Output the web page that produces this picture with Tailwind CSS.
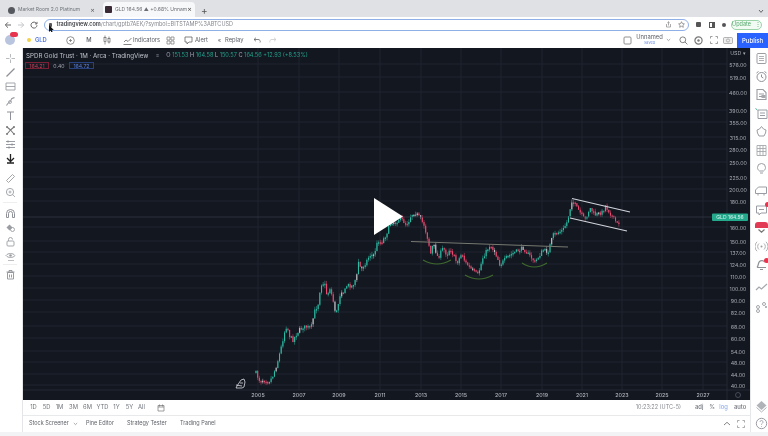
<!doctype html>
<html>
<head>
<meta charset="utf-8">
<script src="https://cdn.jsdelivr.net/npm/@tailwindcss/browser@4"></script>
<title>GLD chart</title>
</head>
<body class="m-0 overflow-hidden bg-white">
<div class="w-[768px] h-[436px] flex flex-col overflow-hidden bg-white font-['Inter','Liberation_Sans',sans-serif] text-[#4a4e57] blur-[0.6px] relative">

  <!-- tab strip -->
  <div class="h-[17px] shrink-0 bg-[#dfe1e5] flex items-end pl-[8px] relative">
    <div class="w-[87px] h-[14px] flex items-center text-[5px] text-[#70747a]">
      <span class="w-[7px] h-[7px] rounded-full bg-[#55585e] shrink-0"></span>
      <span class="ml-[3px] whitespace-nowrap">Market Room 2.0 Platinum</span>
      <span class="ml-auto text-[7px] text-[#666]">×</span>
    </div>
    <div class="ml-[8px] w-[92px] h-[15px] bg-[#f7f8f9] rounded-t-[4px] flex items-center pl-[2px] text-[5px] text-[#6b6f75]">
      <span class="w-[7px] h-[7px] rounded-[1px] bg-[#3a2a35] shrink-0"></span>
      <span class="ml-[3px] whitespace-nowrap">GLD 164.56 ▲ +0.68% Unnam</span>
      <span class="ml-auto mr-[4px] text-[7px] text-[#555]">×</span>
    </div>
    <span class="ml-[6px] mb-[1px] text-[10px] leading-[12px] text-[#555]">+</span>
    <svg class="ml-auto mr-[4px] mb-[3px]" width="6" height="5" viewBox="0 0 6 5"><path d="M1 1l2 2.400L5 1" fill="none" stroke="#666" stroke-width="1"/></svg>
  </div>

  <!-- url row -->
  <div class="h-[15px] shrink-0 bg-white flex items-center relative">
    <svg class="ml-[4px]" width="8" height="8" viewBox="0 0 8 8"><path d="M7 4H1.500M4 1.300L1.300 4 4 6.700" fill="none" stroke="#666" stroke-width="1"/></svg>
    <svg class="ml-[5px]" width="8" height="8" viewBox="0 0 8 8"><path d="M1 4h5.500M4 1.300L6.700 4 4 6.700" fill="none" stroke="#c4c6ca" stroke-width="1"/></svg>
    <svg class="ml-[5px]" width="8" height="8" viewBox="0 0 8 8"><path d="M6.600 2.600A3 3 0 1 0 7 4.300M7 .9v2H5" fill="none" stroke="#666" stroke-width="1"/></svg>
    <div class="ml-[6px] w-[645px] h-[12px] rounded-full border-[1.5px] border-[#8fb0e6] flex items-center pl-[4px] text-[5.500px]">
      <span class="w-[3px] h-[4px] bg-[#555] rounded-[1px] shrink-0"></span>
      <span class="ml-[4.500px] whitespace-nowrap"><span class="text-[#3f4247] font-semibold">tradingview.com</span><span class="text-[#85888e]">/chart/gptb7AEK/?symbol=BITSTAMP%3ABTCUSD</span></span>
      <svg class="ml-auto" width="7" height="7" viewBox="0 0 7 7"><path d="M1.500 3v3h4V3M3.500 4.500V.8M2.300 1.900L3.500.8l1.200 1.100" fill="none" stroke="#888" stroke-width=".7"/></svg>
      <svg class="ml-[6px] mr-[3px]" width="7" height="7" viewBox="0 0 7 7"><path d="M3.500.7l.9 1.900 2 .3-1.500 1.400.4 2-1.800-1-1.800 1 .4-2L.6 2.900l2-.3z" fill="none" stroke="#777" stroke-width=".7"/></svg>
    </div>
    <span class="ml-[7px] w-[5px] h-[5px] bg-[#555] rounded-[1px]"></span>
    <span class="ml-[8px] w-[6px] h-[6px] border border-[#555] border-r-[3px]"></span>
    <span class="ml-[7px] w-[4px] h-[4px] rounded-full bg-[#555]"></span>
    <div class="ml-[5px] w-[31px] h-[10px] rounded-full border border-[#9ad3a8] bg-[#f1faf3] flex items-center justify-center text-[5.500px] text-[#54a96c]">Update <span class="ml-[4px]">⋮</span></div>
    <!-- mouse cursor -->
    <svg class="absolute left-[48px] top-[8px]" width="6" height="9" viewBox="0 0 6 9"><path d="M1 0v7l1.600-1.500L3.800 8.500 5 8 3.800 5H5.800z" fill="#111"/></svg>
  </div>

  <!-- tradingview toolbar -->
  <div class="h-[16px] shrink-0 bg-white flex items-center text-[5.800px] text-[#5a5e66] relative whitespace-nowrap">
    <div class="ml-[5px] w-[10px] h-[10px] rounded-full bg-[#b9c4de] relative">
      <span class="absolute left-[5px] top-[-3px] w-[8px] h-[5px] rounded-full bg-[#e8344e]"></span>
    </div>
    <span class="ml-[12px] w-[4px] h-[4px] rounded-full bg-[#f3d34a]"></span>
    <span class="ml-[4px] w-[13px] text-[#4a72d8] font-semibold">GLD</span>
    <svg class="ml-[17.500px]" width="9" height="9" viewBox="0 0 9 9"><circle cx="4.500" cy="4.500" r="3.800" fill="none" stroke="#777" stroke-width=".8"/><path d="M4.500 3v3M3 4.500h3" stroke="#777" stroke-width=".8"/></svg>
    <span class="ml-[10.500px] w-[8px] text-center font-medium">M</span>
    <svg class="ml-[10px]" width="8" height="10" viewBox="0 0 8 10"><path d="M2 .5v9M6 1.500v7" stroke="#666" stroke-width=".7"/><rect x="1" y="2.500" width="2" height="4" fill="#fff" stroke="#666" stroke-width=".7"/><rect x="5" y="3.500" width="2" height="3.500" fill="#fff" stroke="#666" stroke-width=".7"/></svg>
    <svg class="ml-[11.500px]" width="9" height="9" viewBox="0 0 9 9"><path d="M.5 8.500h8M1 6l2-2 2 1.500L8.500 2" fill="none" stroke="#666" stroke-width=".8"/></svg>
    <span class="ml-[1.500px] w-[25px]">Indicators</span>
    <svg class="ml-[7.500px]" width="9" height="9" viewBox="0 0 9 9"><path d="M1 1h3v3H1zM5 1h3v3H5zM1 5h3v3H1zM5 5h3v3H5z" fill="none" stroke="#777" stroke-width=".7"/></svg>
    <svg class="ml-[9px]" width="9" height="9" viewBox="0 0 9 9"><path d="M1 1h7v5H5L3 8V6H1z" fill="none" stroke="#666" stroke-width=".8"/></svg>
    <span class="ml-[2.500px] w-[12px]">Alert</span>
    <span class="ml-[10px] w-[5px] text-center">«</span>
    <span class="ml-[3px] w-[18px]">Replay</span>
    <svg class="ml-[10px]" width="8" height="7" viewBox="0 0 8 7"><path d="M1 2.500h4a2 2 0 0 1 2 3M3 .7L1 2.500l2 1.800" fill="none" stroke="#666" stroke-width=".8"/></svg>
    <svg class="ml-[8px]" width="8" height="7" viewBox="0 0 8 7"><path d="M7 2.500H3a2 2 0 0 0-2 3M5 .7l2 1.800-2 1.800" fill="none" stroke="#ccc" stroke-width=".8"/></svg>

    <svg class="ml-[345.500px]" width="9" height="9" viewBox="0 0 9 9"><rect x="1" y="1" width="7" height="7" rx="1" fill="none" stroke="#777" stroke-width=".8"/></svg>
    <div class="ml-[5.500px] w-[25px] flex flex-col items-center leading-[6px]"><span class="text-[5.800px]">Unnamed</span><span class="text-[3.800px] text-[#6d8fe0]">Saved</span></div>
    <svg class="ml-[3.500px]" width="5" height="4" viewBox="0 0 5 4"><path d="M.8 1l1.700 1.600L4.200 1" fill="none" stroke="#888" stroke-width=".7"/></svg>
    <svg class="ml-[8px]" width="9" height="9" viewBox="0 0 9 9"><circle cx="3.800" cy="3.800" r="2.900" fill="none" stroke="#666" stroke-width=".8"/><path d="M6 6l2.400 2.400" stroke="#666" stroke-width=".8"/></svg>
    <svg class="ml-[6px]" width="9" height="9" viewBox="0 0 9 9"><circle cx="4.500" cy="4.500" r="3.600" fill="none" stroke="#777" stroke-width="1.200"/><circle cx="4.500" cy="4.500" r="1.200" fill="#777"/></svg>
    <svg class="ml-[7.500px]" width="8" height="8" viewBox="0 0 8 8"><path d="M.5 2.500V.5h2M5.500.5h2v2M7.500 5.500v2h-2M2.500 7.500h-2v-2" fill="none" stroke="#777" stroke-width=".7"/></svg>
    <svg class="ml-[5px]" width="10" height="8" viewBox="0 0 10 8"><rect x=".5" y="1.500" width="9" height="6" rx="1" fill="#eee" stroke="#888" stroke-width=".6"/><circle cx="5" cy="4.500" r="1.600" fill="none" stroke="#888" stroke-width=".6"/></svg>
    <div class="ml-auto w-[31px] h-[15px] mt-[1px] bg-[#2962ff] text-white flex items-center justify-center text-[6px] font-medium">Publish</div>
  </div>

  <!-- main -->
  <div class="h-[384px] shrink-0 flex">
    <!-- left tools -->
    <div class="w-[23px] shrink-0 flex flex-col items-center pt-[3px] pr-[2px] border-r border-[#e4e5e8] text-[#777]">
      <div class="h-[14.4px] flex items-center"><svg width="11" height="11" viewBox="0 0 11 11"><path d="M5.500 1v3.500M5.500 6.500V10M1 5.500h3.500M6.500 5.500H10" stroke="#a5a8ad" stroke-width=".8"/></svg></div>
      <div class="h-[14.4px] flex items-center"><svg width="11" height="11" viewBox="0 0 11 11"><path d="M1.500 9.500l8-8" stroke="#8e9198" stroke-width="1.200"/></svg></div>
      <div class="h-[14.4px] flex items-center"><svg width="11" height="11" viewBox="0 0 11 11"><path d="M1 2h9M1 5.500h9M1 9h9M1 2v7M10 2v7" fill="none" stroke="#9a9da3" stroke-width=".9"/></svg></div>
      <div class="h-[14.4px] flex items-center"><svg width="11" height="11" viewBox="0 0 11 11"><path d="M1.500 9.500C3 6 6 6 6 4s3-2 3.500-2.500" fill="none" stroke="#9a9da3" stroke-width="1.100"/><circle cx="5" cy="6" r="1.500" fill="none" stroke="#9a9da3" stroke-width=".8"/></svg></div>
      <div class="h-[14.4px] flex items-center"><svg width="11" height="11" viewBox="0 0 11 11"><path d="M2 2h7M5.500 2v8" fill="none" stroke="#8e9198" stroke-width="1"/></svg></div>
      <div class="h-[14.4px] flex items-center"><svg width="11" height="11" viewBox="0 0 11 11"><path d="M2 2l3.500 3L9 2M2 9l3.500-4L9 9" fill="none" stroke="#777" stroke-width="1.100"/><circle cx="2" cy="2" r="1" fill="#777"/><circle cx="9" cy="2" r="1" fill="#777"/><circle cx="2" cy="9" r="1" fill="#777"/><circle cx="9" cy="9" r="1" fill="#777"/></svg></div>
      <div class="h-[14.4px] flex items-center"><svg width="11" height="11" viewBox="0 0 11 11"><path d="M1 2.500h9M1 5.500h9M1 8.500h9" stroke="#8e9198" stroke-width=".9"/><circle cx="3" cy="2.500" r="1" fill="#8e9198"/><circle cx="7" cy="5.500" r="1" fill="#8e9198"/><circle cx="4" cy="8.500" r="1" fill="#8e9198"/></svg></div>
      <div class="h-[14.4px] flex items-center"><svg width="11" height="11" viewBox="0 0 11 11"><path d="M5.500 1v7.500M2 5l3.500 3.500L9 5M2 10h7" fill="none" stroke="#222" stroke-width="1.300"/></svg></div>
      <div class="h-[14.4px] flex items-center mt-[5px]"><svg width="11" height="11" viewBox="0 0 11 11"><path d="M1.500 7.500l6-6 2 2-6 6z" fill="none" stroke="#9a9da3" stroke-width=".9"/></svg></div>
      <div class="h-[14.4px] flex items-center"><svg width="11" height="11" viewBox="0 0 11 11"><circle cx="5" cy="5" r="3.600" fill="none" stroke="#9a9da3" stroke-width=".9"/><path d="M7.500 7.500L10 10M3.500 5h3M5 3.500v3" stroke="#9a9da3" stroke-width=".8"/></svg></div>
      <div class="w-[14px] h-px bg-[#eeeeef] mt-[2px]"></div>
      <div class="h-[14.4px] flex items-center mt-[3px]"><svg width="11" height="11" viewBox="0 0 11 11"><path d="M1.500 9.500V5.500a4 4 0 0 1 8 0v4H7.500V5.500a2 2 0 0 0-4 0v4z" fill="none" stroke="#8e9198" stroke-width="1"/></svg></div>
      <div class="h-[14.4px] flex items-center"><svg width="11" height="11" viewBox="0 0 11 11"><path d="M1.500 5.500l3-3 3 3-3 3z" fill="#9a9da3"/><circle cx="7.500" cy="7.500" r="2" fill="none" stroke="#9a9da3" stroke-width=".9"/></svg></div>
      <div class="h-[14.4px] flex items-center"><svg width="11" height="11" viewBox="0 0 11 11"><rect x="2" y="5" width="7" height="5" rx="1" fill="none" stroke="#9a9da3" stroke-width=".9"/><path d="M3.500 5V3.500a2 2 0 0 1 4 0" fill="none" stroke="#9a9da3" stroke-width=".9"/></svg></div>
      <div class="h-[14.4px] flex items-center"><svg width="11" height="11" viewBox="0 0 11 11"><path d="M1 4.500C3 1.800 8 1.800 10 4.500 8 7.200 3 7.200 1 4.500z" fill="none" stroke="#9a9da3" stroke-width=".9"/><circle cx="5.500" cy="4.500" r="1.300" fill="#9a9da3"/><path d="M3 9.500h6" stroke="#b5b7bb" stroke-width=".9"/></svg></div>
      <div class="w-[14px] h-px bg-[#eeeeef] mt-[1px]"></div>
      <div class="h-[14.4px] flex items-center mt-[2px]"><svg width="11" height="11" viewBox="0 0 11 11"><path d="M2.500 3.500h6v6.500h-6zM1.500 3h8M4 3V1.500h3V3M4.500 5.500v3M6.500 5.500v3" fill="none" stroke="#8e9198" stroke-width=".9"/></svg></div>
    </div>

    <!-- center -->
    <div class="w-[727px] shrink-0 flex flex-col">
      <div class="h-[352px] shrink-0 bg-[#131720] relative overflow-hidden">
        <svg id="chart" class="absolute inset-0" width="727" height="352" viewBox="23 48 727 352" font-family="Inter, Liberation Sans, sans-serif">
          <g id="grid" stroke="#20252f" stroke-width="1"></g>
          <g id="candles"></g>
          <path d="M23 217H712" stroke="#3b4150" stroke-width=".6"/>
          <path d="M411 241.500L568 247" stroke="#777a70" stroke-width="1"/>
          <path d="M572 198.500L630 212M570 218L627 231" stroke="#d0d3da" stroke-width="1.200"/>
          <g fill="none" stroke="#3f6b2d" stroke-width="1.200">
            <path d="M423 260Q437 268 451 260"/>
            <path d="M465 275Q479 283 493 275"/>
            <path d="M522 263Q534 271 547 263"/>
          </g>
          <path d="M237 386l4-6 3-1 1 3-1 5-2 1h-6zM240 383l3 0M236 385l6 1" fill="none" stroke="#d8dadf" stroke-width=".8"/>
          <path d="M727 48V400M23 390H750" stroke="#2a2e39" stroke-width=".8"/>
          <g fill="#a5a8b0" font-size="5.300" text-anchor="middle">
            <text x="738" y="55">USD ▾</text>
            <text x="738" y="67">576.00</text><text x="738" y="80">519.00</text><text x="738" y="95">460.00</text>
            <text x="738" y="113">390.00</text><text x="738" y="125">355.00</text><text x="738" y="140">315.00</text>
            <text x="738" y="152">280.00</text><text x="738" y="165">250.00</text><text x="738" y="180">225.00</text>
            <text x="738" y="192">200.00</text><text x="738" y="204">180.00</text><text x="738" y="230">160.00</text>
            <text x="738" y="244">150.00</text><text x="738" y="255">137.00</text><text x="738" y="267">124.00</text>
            <text x="738" y="279">110.00</text><text x="738" y="291">100.00</text><text x="738" y="303">90.00</text>
            <text x="738" y="315">82.00</text><text x="738" y="329">68.00</text><text x="738" y="341">60.00</text>
            <text x="738" y="354">54.00</text><text x="738" y="365">48.00</text><text x="738" y="377">44.00</text>
            <text x="738" y="388">40.00</text>
          </g>
          <rect x="712" y="213.500" width="36" height="7.500" rx="1" fill="#25a98d"/>
          <text x="730" y="219.300" fill="#d5f3ec" font-size="5" text-anchor="middle">GLD  164.56</text>
          <circle cx="738" cy="395" r="2.500" fill="none" stroke="#5a5f6b" stroke-width=".7"/>
          <g fill="#b0b3ba" font-size="5.300" text-anchor="middle" font-weight="500">
            <text x="258" y="396.500">2005</text><text x="299" y="396.500">2007</text><text x="339" y="396.500">2009</text>
            <text x="380" y="396.500">2011</text><text x="421" y="396.500">2013</text><text x="461" y="396.500">2015</text>
            <text x="501" y="396.500">2017</text><text x="542" y="396.500">2019</text><text x="582" y="396.500">2021</text>
            <text x="622" y="396.500">2023</text><text x="662" y="396.500">2025</text><text x="703" y="396.500">2027</text>
          </g>
          <path d="M374 198V235L403 216.500z" fill="#fff"/>
        </svg>
        <!-- legend over the chart -->
        <div class="absolute left-[3px] top-[4px] flex items-center text-[6.200px] leading-[7px] whitespace-nowrap">
          <span class="text-[#c0c3ca]">SPDR Gold Trust · 1M · Arca · TradingView</span>
          <span class="ml-[8px] text-[#8a8e98] text-[5px]">≡</span>
          <span class="ml-[7px] text-[#22a08b] text-[5.600px]"><span class="text-[#aab]">O</span> 151.53 <span class="text-[#aab]">H</span> 164.58 <span class="text-[#aab]">L</span> 150.57 <span class="text-[#aab]">C</span> 164.56 +12.93 (+8.53%)</span>
        </div>
        <div class="absolute left-[2px] top-[14px] flex items-center text-[5.200px] leading-[6px] whitespace-nowrap">
          <span class="w-[24px] h-[7px] border border-[#7a2035] text-[#c4415a] flex items-center justify-center">164.21</span>
          <span class="ml-[3px] w-[14px] text-center text-[#a5a8b0]">0.40</span>
          <span class="ml-[3px] w-[25px] h-[7px] border border-[#27407e] text-[#5a80dc] flex items-center justify-center">164.72</span>
        </div>
      </div>

      <!-- range row -->
      <div class="h-[16px] shrink-0 flex items-center text-[5.800px] text-[#6e727a] border-b border-[#e8e9eb] whitespace-nowrap">
        <span class="ml-[5px] w-[11px] text-center">1D</span>
        <span class="ml-[2px] w-[11px] text-center">5D</span>
        <span class="ml-[2px] w-[11px] text-center">1M</span>
        <span class="ml-[3px] w-[11px] text-center">3M</span>
        <span class="ml-[3px] w-[11px] text-center">6M</span>
        <span class="ml-[3px] w-[13px] text-center">YTD</span>
        <span class="ml-[2px] w-[11px] text-center">1Y</span>
        <span class="ml-[2px] w-[11px] text-center">5Y</span>
        <span class="ml-[1px] w-[11px] text-center">All</span>
        <svg class="ml-[10px]" width="8" height="8" viewBox="0 0 8 8"><path d="M1 1.500h6v5.500H1zM1 3h6M2.500.5v2M5.500.5v2" fill="none" stroke="#777" stroke-width=".7"/></svg>
        <span class="ml-auto text-[#85888f] text-[5.500px]">10:23:22 (UTC-5)</span>
        <span class="ml-[14px] w-[8px] text-center font-medium">adj</span>
        <span class="ml-[5px] w-[8px] text-center">%</span>
        <span class="ml-[3px] w-[9px] text-center text-[#7f9fe6]">log</span>
        <span class="ml-[6px] mr-[5px] w-[11px] text-center font-medium">auto</span>
      </div>

      <!-- bottom tabs -->
      <div class="h-[15px] shrink-0 flex items-center text-[5.500px] text-[#5e6269] whitespace-nowrap">
        <span class="ml-[6px] w-[39px]">Stock Screener</span>
        <svg class="ml-[4.500px]" width="5" height="4" viewBox="0 0 5 4"><path d="M.8 1l1.700 1.600L4.200 1" fill="none" stroke="#888" stroke-width=".7"/></svg>
        <span class="ml-[8.500px] w-[28px]">Pine Editor</span>
        <span class="ml-[13px] w-[40px]">Strategy Tester</span>
        <span class="ml-[13px] w-[35px]">Trading Panel</span>
        <svg class="ml-auto" width="8" height="5" viewBox="0 0 8 5"><path d="M1 4l3-2.700L7 4" fill="none" stroke="#777" stroke-width=".9"/></svg>
        <svg class="ml-[6px] mr-[5px]" width="8" height="8" viewBox="0 0 8 8"><path d="M.5 2.500V.5h2M5.500.5h2v2M7.500 5.500v2h-2M2.500 7.500h-2v-2" fill="none" stroke="#888" stroke-width=".7"/></svg>
      </div>
    </div>

    <!-- right sidebar -->
    <div class="flex-1 flex flex-col items-center pt-[1px] pl-[3px] border-l border-[#e6e7e9]">
      <div class="h-[18.400px] flex items-center"><svg width="13" height="13" viewBox="0 0 13 13"><rect x="2" y="1.500" width="9" height="10" rx="1" fill="none" stroke="#9a9da3" stroke-width="1"/><path d="M4 4.500h5M4 6.500h5M4 8.500h5" stroke="#9a9da3" stroke-width=".8"/></svg></div>
      <div class="h-[18.400px] flex items-center"><svg width="13" height="13" viewBox="0 0 13 13"><circle cx="6.500" cy="7" r="4.500" fill="none" stroke="#8e9198" stroke-width="1"/><path d="M6.500 4.500V7l1.800 1M1.500 3l2-1.500M11.500 3l-2-1.500" fill="none" stroke="#8e9198" stroke-width="1"/></svg></div>
      <div class="h-[18.400px] flex items-center"><svg width="13" height="13" viewBox="0 0 13 13"><path d="M2 1.500h6l3 3v7H2zM4 6h5M4 8.500h3" fill="none" stroke="#9a9da3" stroke-width="1.100"/><rect x="6.500" y="7" width="4" height="3" fill="#a5a8ad"/></svg></div>
      <div class="h-[18.400px] flex items-center"><svg width="13" height="13" viewBox="0 0 13 13"><path d="M3 3h9v8.500H3zM5 6h5M5 8.500h5" fill="none" stroke="#9a9da3" stroke-width="1"/><path d="M.5 1.500l2 1.500" stroke="#4a9" stroke-width="1"/></svg></div>
      <div class="h-[18.400px] flex items-center"><svg width="13" height="13" viewBox="0 0 13 13"><path d="M6.500 1.500l2 2.500 2.500 1-.5 3-1.500 3h-5l-1.500-3-.5-3 2.500-1z" fill="none" stroke="#9a9da3" stroke-width="1"/></svg></div>
      <div class="h-[18.400px] flex items-center"><svg width="13" height="13" viewBox="0 0 13 13"><path d="M2 1.500h9v10H2zM2 4.500h9M2 7.500h9M5 1.500v10M8 1.500v10" fill="none" stroke="#a5a8ad" stroke-width=".9"/></svg></div>
      <div class="h-[18.400px] flex items-center"><svg width="13" height="13" viewBox="0 0 13 13"><path d="M4.500 9C3 8 2.500 6.800 2.500 5.500a4 4 0 0 1 8 0c0 1.300-.5 2.500-2 3.500zM5 11h3" fill="none" stroke="#9a9da3" stroke-width="1"/></svg></div>
      <div class="h-[18.400px] flex items-center mt-[4px]"><svg width="14" height="13" viewBox="0 0 14 13"><path d="M1.500 9.500V6l3-3h8v6.500zM4 9.500v2M10 9.500v2" fill="none" stroke="#9a9da3" stroke-width="1"/></svg></div>
      <div class="h-[18.400px] flex items-center relative"><svg width="13" height="13" viewBox="0 0 13 13"><path d="M1.500 3h10v7H6l-2 2v-2H1.500zM4 6.500h5" fill="none" stroke="#9a9da3" stroke-width="1"/></svg><span class="absolute right-[-2px] top-[2px] w-[5px] h-[5px] rounded-full bg-[#e8344e]"></span></div>
      <div class="h-[18.400px] flex items-center"><div class="w-[13px] h-[11px] relative flex flex-col"><span class="w-[13px] h-[6px] rounded-t-[3px] bg-[#e23a55]"></span><svg class="mt-[1px] ml-[3px]" width="7" height="4" viewBox="0 0 7 4"><path d="M.5.500l3 2.700 3-2.700" fill="none" stroke="#777" stroke-width="1.200"/></svg></div></div>
      <div class="h-[18.400px] flex items-center"><svg width="13" height="13" viewBox="0 0 13 13"><circle cx="6.500" cy="6.500" r="1" fill="#9a9da3"/><path d="M4 3.500a4 4 0 0 0 0 6M9 3.500a4 4 0 0 1 0 6M2 1.800a6.500 6.500 0 0 0 0 9.400M11 1.800a6.500 6.500 0 0 1 0 9.400" fill="none" stroke="#a5a8ad" stroke-width=".9"/></svg></div>
      <div class="h-[18.400px] flex items-center relative"><svg width="13" height="13" viewBox="0 0 13 13"><path d="M2 9.500C3.500 8 3 5 4.500 3.500c1.500-1.300 4-1 5 .5M2 9.500h9M5 11.500h3" fill="none" stroke="#8e9198" stroke-width="1.200"/></svg><span class="absolute right-[-1px] top-[3px] w-[5px] h-[5px] rounded-full bg-[#e8344e]"></span></div>
      <div class="h-[18.400px] flex items-center mt-[5px]"><svg width="13" height="13" viewBox="0 0 13 13"><path d="M1 9l3-3 2.500 2L12 3" fill="none" stroke="#a5a8ad" stroke-width="1.200"/></svg></div>
      <div class="h-[18.400px] flex items-center mt-[1px]"><svg width="13" height="13" viewBox="0 0 13 13"><circle cx="3" cy="10" r="1.500" fill="none" stroke="#9a9da3" stroke-width=".9"/><circle cx="3" cy="6" r="1.500" fill="none" stroke="#9a9da3" stroke-width=".9"/><circle cx="9" cy="3" r="1.500" fill="none" stroke="#9a9da3" stroke-width=".9"/><circle cx="11" cy="6" r="1" fill="#9a9da3"/></svg></div>
      <div class="mt-auto h-[18px] flex items-center"><svg width="13" height="13" viewBox="0 0 13 13"><path d="M6.500 1l5 4.500-5 4.500-5-4.500z" fill="#b0b3b8"/><path d="M1.500 7.500l5 4.500 5-4.500" fill="none" stroke="#b0b3b8" stroke-width="1"/></svg></div>
      <div class="h-[17px] flex items-center"><svg width="13" height="13" viewBox="0 0 13 13"><circle cx="6.500" cy="6.500" r="5.200" fill="none" stroke="#9a9da3" stroke-width="1"/><path d="M5 5a1.500 1.500 0 1 1 2.300 1.300c-.6.400-.8.700-.8 1.400M6.500 9.300v.7" fill="none" stroke="#9a9da3" stroke-width=".9"/></svg></div>
    </div>
  </div>

  <div class="flex-1 bg-[#f2f3f4]"></div>
</div>

<script>
(function () {
  var NS = 'http://www.w3.org/2000/svg';
  var grid = document.getElementById('grid');
  var candles = document.getElementById('candles');
  function line(parent, x1, y1, x2, y2, color, w) {
    var l = document.createElementNS(NS, 'line');
    l.setAttribute('x1', x1); l.setAttribute('y1', y1);
    l.setAttribute('x2', x2); l.setAttribute('y2', y2);
    if (color) l.setAttribute('stroke', color);
    if (w) l.setAttribute('stroke-width', w);
    parent.appendChild(l);
  }
  [64,77,92,110,122,137,149,162,177,189,201,227,241,252,264,276,288,300,312,326,338,351,362,374,385].forEach(function (y) {
    line(grid, 23, y, 727, y);
  });
  [258,299,339,380,421,461,501,542,582,622,662,703].forEach(function (x) {
    line(grid, x, 48, x, 390);
  });
  var pts = [[256,373],[259,380],[264,380],[269,381],[272,378],[277,364],[281,348],[285,330],[287,325],[289,335],[293,340],[297,333],[302,327],[307,327],[311,328],[315,310],[318,305],[320,290],[322,282],[325,285],[327,296],[330,288],[333,300],[336,315],[338,305],[341,290],[344,293],[347,285],[352,286],[354,283],[357,275],[358,260],[361,270],[366,262],[370,255],[374,255],[378,240],[381,243],[386,235],[391,222],[396,222],[400,218],[405,223],[408,223],[411,215],[415,212],[420,218],[424,225],[428,240],[431,255],[433,243],[438,258],[443,248],[447,255],[450,248],[457,263],[462,253],[465,262],[472,270],[478,275],[483,257],[490,245],[495,252],[500,265],[507,257],[515,252],[523,248],[535,262],[543,250],[548,252],[553,235],[563,230],[567,222],[572,200],[577,208],[585,220],[590,208],[595,215],[603,212],[605,205],[608,210],[618,225],[620,217]];
  function yAt(x) {
    for (var i = 0; i < pts.length - 1; i++) {
      if (x >= pts[i][0] && x <= pts[i + 1][0]) {
        var t = (x - pts[i][0]) / (pts[i + 1][0] - pts[i][0]);
        return pts[i][1] + t * (pts[i + 1][1] - pts[i][1]);
      }
    }
    return pts[pts.length - 1][1];
  }
  var seed = 7;
  function rnd() { seed = (seed * 16807) % 2147483647; return seed / 2147483647; }
  var prev = yAt(256);
  for (var x = 256; x <= 620; x += 1.68) {
    var c = yAt(x) + (rnd() - 0.5) * 4;
    var o = prev;
    var up = c < o;
    var r = rnd();
    var color = up ? '#2dbda4' : '#ee4a70';
    if (r < 0.1) color = '#c0c3c8';
    var top = Math.min(o, c), bot = Math.max(o, c);
    if (bot - top < 1.5) bot = top + 1.5;
    line(candles, x, top - rnd() * 3, x, bot + rnd() * 3, color, 0.5);
    line(candles, x, top, x, bot, color, 1.1);
    prev = c;
  }
})();
</script>
</body>
</html>
